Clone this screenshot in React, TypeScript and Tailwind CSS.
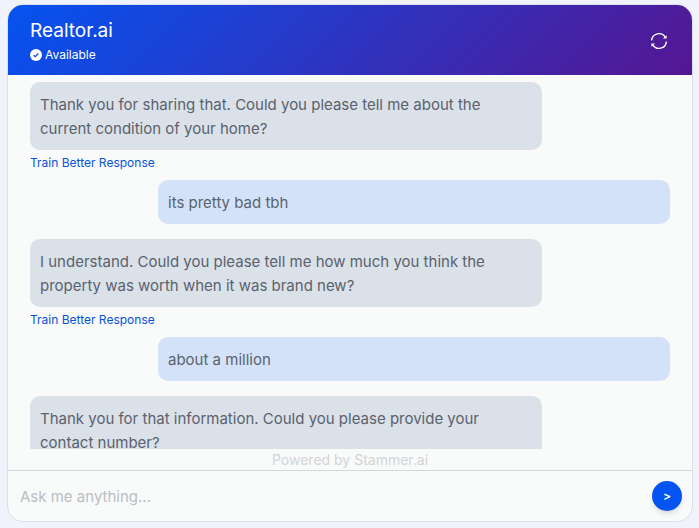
import { FormEvent, useState } from "react";

type Message = {
  from: "bot" | "user";
  text: string;
};

const initialMessages: Message[] = [
  { from: "bot", text: "Thank you for sharing that. Could you please tell me about the current condition of your home?" },
  { from: "user", text: "its pretty bad tbh" },
  { from: "bot", text: "I understand. Could you please tell me how much you think the property was worth when it was brand new?" },
  { from: "user", text: "about a million" },
  { from: "bot", text: "Thank you for that information. Could you please provide your contact number?" },
];

const VerifiedIcon = () => (
  <svg viewBox="0 0 12 12" className="size-3" aria-hidden="true">
    <circle cx="6" cy="6" r="6" fill="#fff" />
    <path d="M3.6 6.1 5.3 7.7 8.4 4.5" fill="none" stroke="#1d3fd6" strokeWidth="1.3" />
  </svg>
);

const RefreshIcon = () => (
  <svg viewBox="0 0 18 18" className="size-[18px]" fill="none" stroke="#fff" strokeWidth="1.4" aria-hidden="true">
    <path d="M1.6 8.4A7.4 7.4 0 0 1 15.4 5.4" />
    <path d="M16.4 9.6A7.4 7.4 0 0 1 2.6 12.6" />
    <path d="M16.6 3.2V6.6H13Z" fill="#fff" stroke="none" />
    <path d="M1.4 14.8V11.4H5Z" fill="#fff" stroke="none" />
  </svg>
);

const BotMessage = ({ text }: { text: string }) => (
  <div className="flex flex-col items-start">
    <p className="w-4/5 rounded-[10px] bg-[#dbe1e9] px-2.5 pt-[11px] pb-[9px]">{text}</p>
    <button type="button" className="mt-[5px] h-[15px] text-xs leading-4 text-[#0653d8]">
      Train Better Response
    </button>
  </div>
);

const UserMessage = ({ text }: { text: string }) => (
  <p className="mt-2.5 mb-[15px] w-4/5 self-end rounded-[10px] bg-[#d4e2f9] px-2.5 pt-[11px] pb-[9px]">{text}</p>
);

const App = () => {
  const [messages, setMessages] = useState(initialMessages);
  const [draft, setDraft] = useState("");

  const send = (event: FormEvent) => {
    event.preventDefault();
    if (!draft.trim()) return;
    setMessages([...messages, { from: "user", text: draft.trim() }]);
    setDraft("");
  };

  return (
    <div className="h-screen bg-[#f0f3fc] pt-1 pr-1.5 pb-1.5 pl-[7px] font-['Inter',sans-serif]">
      <main className="flex h-full flex-col overflow-hidden rounded-2xl border border-[#dbe0ea] bg-[#f9fafa]">
        {/* Header */}
        <header className="flex h-[70px] shrink-0 items-center justify-between bg-linear-[135deg] from-[#0553f0] to-[#551692] pt-0.5 pr-6 pl-[22px] text-white">
          <div>
            <h1 className="text-[19px] leading-7">Realtor.ai</h1>
            <p className="flex items-center gap-[3px] text-xs leading-5">
              <VerifiedIcon />
              Available
            </p>
          </div>
          <button type="button" aria-label="Restart chat">
            <RefreshIcon />
          </button>
        </header>

        {/* Conversation */}
        <section className="flex min-h-0 flex-1 flex-col overflow-x-hidden overflow-y-auto px-[22px] pt-[7px] text-[15px] leading-6 text-[#5a626d] [scrollbar-width:none]">
          {messages.map((message, i) =>
            message.from === "bot" ? (
              <BotMessage key={i} text={message.text} />
            ) : (
              <UserMessage key={i} text={message.text} />
            )
          )}
        </section>

        <p className="shrink-0 text-center text-sm leading-[21px] text-[#d2d4d8]">Powered by Stammer.ai</p>

        {/* Composer */}
        <form onSubmit={send} className="flex shrink-0 items-center border-t border-[#d3d7db] py-2.5 pr-2.5 pl-3">
          <input
            type="text"
            aria-label="Message"
            placeholder="Ask me anything..."
            value={draft}
            onChange={(e) => setDraft(e.target.value)}
            className="h-[30px] min-w-0 flex-1 text-[15px] text-[#5a626d] outline-none placeholder:text-[#b9bec6]"
          />
          <button
            type="submit"
            aria-label="Send"
            className="size-[30px] rounded-full bg-[#0454f2] text-xs font-semibold text-white shadow-md"
          >
            &gt;
          </button>
        </form>
      </main>
    </div>
  );
};

export default App;
